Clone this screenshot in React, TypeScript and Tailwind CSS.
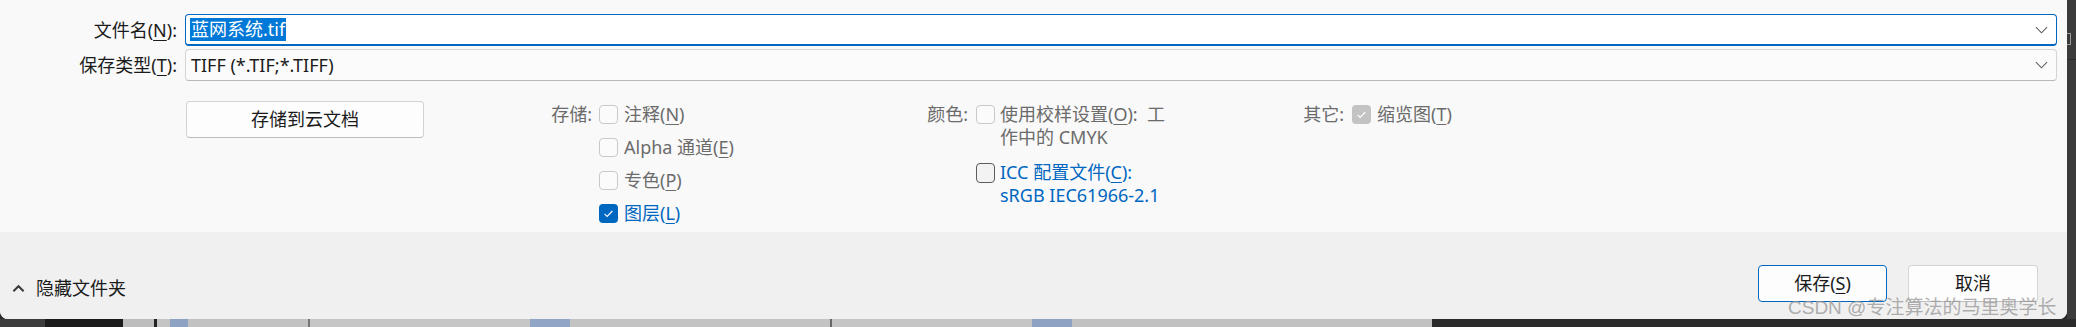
import React from "react";

type BoxKind = "off" | "on" | "dim" | "open";

function Tick() {
  return (
    <svg viewBox="0 0 19 19" className="w-[19px] h-[19px]">
      <path d="M5.6 9.9l2.5 2.5 5.3-5.4" fill="none" stroke="white" strokeWidth="1.1" />
    </svg>
  );
}

function Box({ kind }: { kind: BoxKind }) {
  if (kind === "on")
    return (
      <span className="w-[19px] h-[19px] shrink-0 rounded-[4px] bg-[#0067c0] flex items-center justify-center">
        <Tick />
      </span>
    );
  if (kind === "dim")
    return (
      <span className="w-[19px] h-[19px] shrink-0 rounded-[4px] bg-[#c3c3c3] flex items-center justify-center">
        <Tick />
      </span>
    );
  if (kind === "open")
    return <span className="block w-[19px] h-[20px] shrink-0 rounded-[4px] border border-[#5c5c5c] bg-[#f3f3f3]" />;
  return <span className="block w-[19px] h-[19px] shrink-0 rounded-[4px] border border-[#c9c9c9] bg-[#fbfbfb]" />;
}

function K({ children }: { children: React.ReactNode }) {
  return <u className="underline underline-offset-[3px] decoration-1">{children}</u>;
}

function Opt({ kind, blue, children }: { kind: BoxKind; blue?: boolean; children: React.ReactNode }) {
  return (
    <div className="h-[33px] flex items-center">
      <Box kind={kind} />
      <span className={"ml-[6px] whitespace-nowrap " + (blue ? "text-[#0067c0]" : "text-[#6b6b6b]")}>{children}</span>
    </div>
  );
}

function Chevron() {
  return (
    <svg viewBox="0 0 14 8" className="w-[13px] h-[8px]">
      <path d="M1 1l6 6 6-6" fill="none" stroke="#5a5a5a" strokeWidth="1.1" />
    </svg>
  );
}

export default function App() {
  return (
    <div className="relative w-[2076px] h-[327px] overflow-hidden bg-[#2b2b2b] font-['Noto_Sans','Noto_Sans_CJK_SC',sans-serif] text-[18px] leading-[23px] text-[#1b1b1b]">
      <div className="flex h-[319px]">
        <div className="w-[2067px] h-full bg-[#f9f9f9] rounded-b-[8px] overflow-hidden flex flex-col">
          {/* file name / type */}
          <div className="h-[232px] pt-[14px] flex flex-col">
            <div className="flex items-center h-[32px]">
              <div className="w-[177px] text-right whitespace-nowrap">
                文件名(<K>N</K>):
              </div>
              <div className="ml-[8px] w-[1872px] h-[32px] bg-white border border-[#0067c0] border-b-2 rounded-[4px] flex items-center pl-[4px] pr-[8px]">
                <span className="bg-[#0078d7] text-white leading-[23px] px-px">蓝网系统.tif</span>
                <span className="flex-1" />
                <Chevron />
              </div>
            </div>
            <div className="flex items-center h-[32px] mt-[3px]">
              <div className="w-[177px] text-right whitespace-nowrap">
                保存类型(<K>T</K>):
              </div>
              <div className="ml-[8px] w-[1872px] h-[32px] bg-[#fbfbfb] border border-[#d4d4d4] border-b-[#b8b8b8] rounded-[4px] flex items-center pl-[5px] pr-[8px]">
                <span>TIFF (*.TIF;*.TIFF)</span>
                <span className="flex-1" />
                <Chevron />
              </div>
            </div>

            {/* options */}
            <div className="flex mt-[17px]">
              <button className="ml-[186px] mt-[3px] w-[238px] h-[37px] bg-[#fdfdfd] border border-[#d3d3d3] border-b-[#bcbcbc] rounded-[4px] text-[#1b1b1b]">
                存储到云文档
              </button>

              <div className="ml-[127px] w-[376px] flex">
                <div className="w-[41px] mr-[7px] h-[33px] flex items-center justify-end text-[#6b6b6b] whitespace-nowrap">存储:</div>
                <div className="flex flex-col">
                  <Opt kind="off">
                    注释(<K>N</K>)
                  </Opt>
                  <Opt kind="off">
                    Alpha 通道(<K>E</K>)
                  </Opt>
                  <Opt kind="off">
                    专色(<K>P</K>)
                  </Opt>
                  <Opt kind="on" blue>
                    图层(<K>L</K>)
                  </Opt>
                </div>
              </div>

              <div className="w-[376px] flex">
                <div className="w-[41px] mr-[8px] h-[33px] flex items-center justify-end text-[#6b6b6b] whitespace-nowrap">颜色:</div>
                <div className="flex flex-col pt-[5px]">
                  <div className="flex items-start">
                    <div className="mt-[2px] shrink-0">
                      <Box kind="off" />
                    </div>
                    <span className="ml-[5px] text-[#6b6b6b] whitespace-nowrap">
                      使用校样设置(<K>O</K>):&nbsp; 工<br />作中的 CMYK
                    </span>
                  </div>
                  <div className="flex items-start mt-[12px]">
                    <div className="mt-[2px] shrink-0">
                      <Box kind="open" />
                    </div>
                    <span className="ml-[5px] text-[#0067c0] whitespace-nowrap">
                      ICC 配置文件(<K>C</K>):<br />sRGB IEC61966-2.1
                    </span>
                  </div>
                </div>
              </div>

              <div className="flex">
                <div className="w-[41px] mr-[8px] h-[33px] flex items-center justify-end text-[#6b6b6b] whitespace-nowrap">其它:</div>
                <Opt kind="dim">
                  缩览图(<K>T</K>)
                </Opt>
              </div>
            </div>
          </div>

          {/* bottom band */}
          <div className="flex-1 bg-[#f0f0f0] flex items-start">
            <div className="ml-[12px] mt-[45px] h-[23px] flex items-center">
              <svg viewBox="0 0 14 9" className="w-[13px] h-[9px]">
                <path d="M1.5 7.5l5.5-5.5 5.5 5.5" fill="none" stroke="#3a3a3a" strokeWidth="2.2" />
              </svg>
              <span className="ml-[11px]">隐藏文件夹</span>
            </div>
            <div className="flex-1" />
            <button className="mt-[33px] w-[129px] h-[37px] bg-[#fdfdfd] border border-[#0067c0] rounded-[4px]">
              保存(<K>S</K>)
            </button>
            <button className="mt-[33px] ml-[21px] mr-[29px] w-[130px] h-[37px] bg-[#fdfdfd] border border-[#d5d5d5] border-b-[#bdbdbd] rounded-[4px]">
              取消
            </button>
          </div>
        </div>
        <div className="flex-1 bg-[#3b3b3b] flex flex-col">
          <div className="mt-[33px] w-[4px] h-[12px] border border-[#9a9a9a] border-l-0" />
          <div className="mt-[14px] h-px bg-[#2a2a2a]" />
        </div>
      </div>

      {/* backdrop below the dialog */}
      <div className="flex h-[8px]">
        <div className="w-[45px] bg-[#3c3c3c]" />
        <div className="w-[78px] bg-[#1b1b1b]" />
        <div className="w-[31px] bg-[#bdbdbd]" />
        <div className="w-[3px] bg-[#222]" />
        <div className="w-[13px] bg-[#c4c4c4]" />
        <div className="w-[18px] bg-[#8ea3c4]" />
        <div className="w-[120px] bg-[#c2c2c2]" />
        <div className="w-[2px] bg-[#777]" />
        <div className="w-[220px] bg-[#c6c6c6]" />
        <div className="w-[40px] bg-[#91a6c6]" />
        <div className="w-[260px] bg-[#c3c3c3]" />
        <div className="w-[2px] bg-[#666]" />
        <div className="w-[200px] bg-[#c5c5c5]" />
        <div className="w-[40px] bg-[#8ea3c4]" />
        <div className="w-[360px] bg-[#c1c1c1]" />
        <div className="flex-1 bg-[#2b2b2b]" />
      </div>

      {/* watermark */}
      <div className="absolute left-[1788px] top-[296px] text-[19px] leading-[24px] text-[#9a9a9a]/80 whitespace-nowrap font-['Liberation_Sans','Noto_Sans_CJK_SC',sans-serif]">
        CSDN @专注算法的马里奥学长
      </div>
    </div>
  );
}
